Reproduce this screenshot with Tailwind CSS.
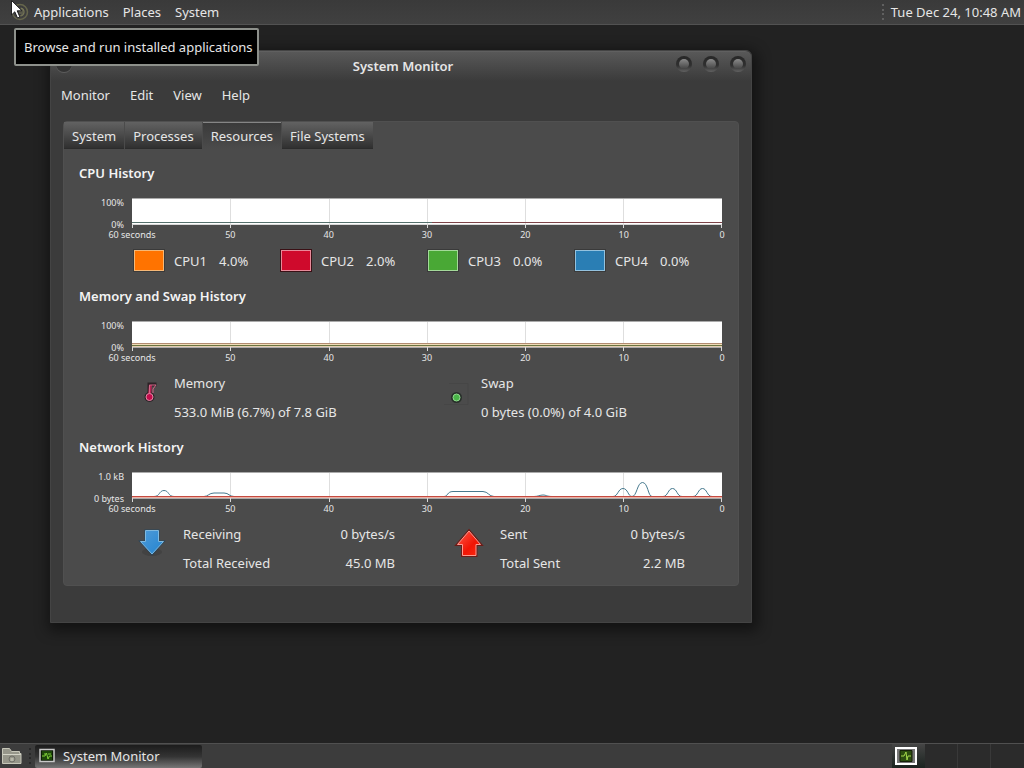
<!DOCTYPE html>
<html lang="en">
<head>
  <meta charset="UTF-8" />
  <meta name="viewport" content="width=device-width, initial-scale=1.0" />
  <title>System Monitor</title>
  <script src="https://cdn.jsdelivr.net/npm/@tailwindcss/browser@4"></script>
</head>
<body class="min-h-screen flex flex-col bg-[#222222] font-['Noto_Sans',sans-serif] text-[13px] leading-5 text-[#e6e6e6] cursor-default">

  <!-- Top panel -->
  <header class="h-[25px] flex items-center justify-between bg-linear-to-b from-[#3a3a3a] to-[#404040] border-b border-[#525252] pr-[3px]">
    <nav class="flex items-center gap-[14px]">
      <button class="flex items-center gap-1 pl-[10px]">
        <svg class="w-5 h-5" viewBox="0 0 20 20" fill="none" aria-hidden="true">
          <circle cx="10" cy="10" r="7.500" stroke="#66664c" stroke-width="1.500" />
          <circle cx="10" cy="10" r="4" stroke="#7b7b58" stroke-width="1.200" stroke-dasharray="14 5" />
          <path d="M10 8v4M12 7v6" stroke="#77775a" />
        </svg>
        Applications
      </button>
      <button>Places</button>
      <button>System</button>
    </nav>
    <div class="flex items-center gap-[6px]">
      <svg class="w-1 h-4" viewBox="0 0 4 16" fill="#606060" aria-hidden="true"><path d="M1 0h2v2H1zM1 5h2v2H1zM1 9h2v2H1zM1 14h2v2H1z" /></svg>
      <button>Tue Dec 24, 10:48 AM</button>
    </div>
  </header>

  <!-- Desktop -->
  <div class="flex-1"></div>

  <!-- System Monitor window -->
  <main class="absolute left-[50px] top-[50px] w-[702px] bg-[#3b3b3b] rounded-t-md border border-[#444444] shadow-[2px_4px_14px_4px_rgba(0,0,0,0.45)]">
    <div class="h-[30px] flex items-center bg-linear-to-b from-[#585858] to-[#3b3b3b] rounded-t-md border-t border-[#606060] px-1 pb-[2px]">
      <button class="w-[18px] h-[18px]" aria-label="Window menu">
        <svg viewBox="0 0 18 18" aria-hidden="true"><circle cx="9" cy="8" r="8" fill="#5c5c5c" /><circle cx="9" cy="7" r="8" fill="#333333" /></svg>
      </button>
      <h1 class="flex-1 pl-[58px] text-center font-semibold">System Monitor</h1>
      <div class="flex gap-[9px] pb-1">
        <button class="w-[18px] h-[18px]" aria-label="Minimize">
          <svg viewBox="0 0 18 18" aria-hidden="true"><use href="#knob" /></svg>
        </button>
        <button class="w-[18px] h-[18px]" aria-label="Maximize">
          <svg viewBox="0 0 18 18" aria-hidden="true"><use href="#knob" /></svg>
        </button>
        <button class="w-[18px] h-[18px]" aria-label="Close">
          <svg viewBox="0 0 18 18" aria-hidden="true"><use href="#knob" /></svg>
        </button>
      </div>
    </div>

    <div class="flex gap-5 px-[10px] pt-1">
      <button>Monitor</button>
      <button>Edit</button>
      <button>View</button>
      <button>Help</button>
    </div>

    <div class="mx-3 mt-4 mb-9 bg-[#4b4b4b] border border-[#505050] rounded-sm">
      <div class="flex items-start gap-px h-[27px]" role="tablist">
        <button role="tab" aria-selected="false" class="h-[27px] px-2 pt-px bg-linear-to-b from-[#626262] via-[#4a4a4a] to-[#303030] border-b border-[#2c2c2c]">System</button>
        <button role="tab" aria-selected="false" class="h-[27px] px-2 pt-px bg-linear-to-b from-[#626262] via-[#4a4a4a] to-[#303030] border-b border-[#2c2c2c]">Processes</button>
        <button role="tab" aria-selected="true" class="h-[27px] px-2 bg-linear-to-b from-[#3a3a3a] to-[#4b4b4b] border-t border-[#858585]">Resources</button>
        <button role="tab" aria-selected="false" class="h-[27px] px-2 pt-px bg-linear-to-b from-[#626262] via-[#4a4a4a] to-[#303030] border-b border-[#2c2c2c]">File Systems</button>
      </div>

      <div class="flex flex-col gap-[15px] pl-[15px] pr-4 pt-[14px] pb-3">
        <!-- CPU -->
        <section>
          <h2 class="font-semibold text-[#f4f4f4]">CPU History</h2>
          <div class="mt-[15px] flex gap-2 text-[9px] leading-[10px]">
            <div class="w-[45px] h-8 flex flex-col justify-between text-right whitespace-nowrap"><span>100%</span><span>0%</span></div>
            <div class="flex-1">
              <svg class="block w-full h-[30px]" viewBox="0 0 590 30" preserveAspectRatio="none" shape-rendering="crispEdges" aria-hidden="true">
                <use href="#plot" />
                <path d="M0 24.500H300" stroke="#55706c" />
                <path d="M300 24.500H590" stroke="#7c4448" />
                <path d="M0 26.500H590" stroke="#d8d8d8" />
              </svg>
              <div class="flex justify-between pt-[2px] whitespace-nowrap">
                <span class="w-0 flex justify-center">60 seconds</span>
                <span class="w-0 flex justify-center">50</span>
                <span class="w-0 flex justify-center">40</span>
                <span class="w-0 flex justify-center">30</span>
                <span class="w-0 flex justify-center">20</span>
                <span class="w-0 flex justify-center">10</span>
                <span class="w-0 flex justify-center">0</span>
              </div>
            </div>
          </div>
          <div class="mt-[10px] ml-[55px] grid grid-cols-4 h-[21px]">
            <div class="flex items-center"><button class="w-[30px] h-[21px] mr-[10px] bg-[#ff7300] border border-[#f5b877] outline outline-[#3a3a3a]" aria-label="CPU1 color"></button>CPU1<span class="ml-3">4.0%</span></div>
            <div class="flex items-center"><button class="w-[30px] h-[21px] mr-[10px] bg-[#cf0a2c] border border-[#e88a9a] outline outline-[#3a1015]" aria-label="CPU2 color"></button>CPU2<span class="ml-3">2.0%</span></div>
            <div class="flex items-center"><button class="w-[30px] h-[21px] mr-[10px] bg-[#49a835] border border-[#a4d99a] outline outline-[#3a3a3a]" aria-label="CPU3 color"></button>CPU3<span class="ml-3">0.0%</span></div>
            <div class="flex items-center"><button class="w-[30px] h-[21px] mr-[10px] bg-[#2a7eb4] border border-[#94c2de] outline outline-[#3a3a3a]" aria-label="CPU4 color"></button>CPU4<span class="ml-3">0.0%</span></div>
          </div>
        </section>

        <!-- Memory and swap -->
        <section>
          <h2 class="font-semibold text-[#f4f4f4]">Memory and Swap History</h2>
          <div class="mt-[15px] flex gap-2 text-[9px] leading-[10px]">
            <div class="w-[45px] h-8 flex flex-col justify-between text-right whitespace-nowrap"><span>100%</span><span>0%</span></div>
            <div class="flex-1">
              <svg class="block w-full h-[30px]" viewBox="0 0 590 30" preserveAspectRatio="none" shape-rendering="crispEdges" aria-hidden="true">
                <use href="#plot" />
                <path d="M0 22.500H590" stroke="#b08a70" />
                <path d="M0 23.500H590" stroke="#f0dcb8" />
                <path d="M0 24.500H590" stroke="#6a7440" />
                <path d="M0 25.500H590" stroke="#e3cdb0" />
              </svg>
              <div class="flex justify-between pt-[2px] whitespace-nowrap">
                <span class="w-0 flex justify-center">60 seconds</span>
                <span class="w-0 flex justify-center">50</span>
                <span class="w-0 flex justify-center">40</span>
                <span class="w-0 flex justify-center">30</span>
                <span class="w-0 flex justify-center">20</span>
                <span class="w-0 flex justify-center">10</span>
                <span class="w-0 flex justify-center">0</span>
              </div>
            </div>
          </div>
          <div class="mt-[10px] ml-[53px] grid grid-cols-[42fr_265fr_42fr_241fr] items-start">
            <button class="w-9 h-9" aria-label="Memory color">
              <svg viewBox="0 0 36 36" aria-hidden="true">
                <path d="M17.500 22V11.500h7" stroke="#2c2226" stroke-width="4" fill="none" />
                <circle cx="17.500" cy="24" r="5" fill="#2c2226" />
                <path d="M17.500 22L18.500 12" stroke="#b32553" stroke-width="3" />
                <path d="M17.500 20V12h6.500l-3 4v4" stroke="#cf6586" fill="none" />
                <circle cx="17.500" cy="24" r="3.500" fill="#c40c4c" stroke="#e38ba7" />
              </svg>
            </button>
            <div class="flex flex-col gap-[9px]"><span>Memory</span><span>533.0 MiB (6.7%) of 7.8 GiB</span></div>
            <button class="w-9 h-9" aria-label="Swap color">
              <svg viewBox="0 0 36 36" aria-hidden="true">
                <path d="M5 31.500h24V10.500H10" stroke="#464646" fill="none" />
                <circle cx="17.500" cy="24.500" r="5.500" fill="#28302a" />
                <circle cx="17.500" cy="24.500" r="3.500" fill="#49b548" stroke="#92dc8f" />
              </svg>
            </button>
            <div class="flex flex-col gap-[9px]"><span>Swap</span><span>0 bytes (0.0%) of 4.0 GiB</span></div>
          </div>
        </section>

        <!-- Network -->
        <section>
          <h2 class="font-semibold text-[#f4f4f4]">Network History</h2>
          <div class="mt-[15px] flex gap-2 text-[9px] leading-[10px]">
            <div class="w-[45px] h-8 flex flex-col justify-between text-right whitespace-nowrap"><span>1.0 kB</span><span>0 bytes</span></div>
            <div class="flex-1">
              <svg class="block w-full h-[30px]" viewBox="0 0 590 30" preserveAspectRatio="none" aria-hidden="true">
                <use href="#plot" shape-rendering="crispEdges" />
                <path d="M0 24.500H22C28 24.500 27 18.500 32 18.500S36 24.500 42 24.500H72C76 24.500 77 21 82 21H92C97 21 97 24.500 102 24.500H312C316 24.500 315 19.500 321 19.500H351C356 19.500 357 24.500 362 24.500H402C406 24.500 408 23 411 23S415 24.500 420 24.500H481C486 24.500 486 16.500 491 16.500S496 24.500 500 24.500C505 24.500 505 10.500 510.500 10.500S516 24.500 520 24.500H531C536 24.500 536 16.500 540.500 16.500S545 24.500 550 24.500H561C566 24.500 566 16.500 570.500 16.500S575 24.500 580 24.500H590" stroke="#46798e" fill="none" />
                <path d="M0 24.500H590" stroke="#c44a40" />
                <path d="M0 25.500H590" stroke="#eeb0a4" />
              </svg>
              <div class="flex justify-between pt-[2px] whitespace-nowrap">
                <span class="w-0 flex justify-center">60 seconds</span>
                <span class="w-0 flex justify-center">50</span>
                <span class="w-0 flex justify-center">40</span>
                <span class="w-0 flex justify-center">30</span>
                <span class="w-0 flex justify-center">20</span>
                <span class="w-0 flex justify-center">10</span>
                <span class="w-0 flex justify-center">0</span>
              </div>
            </div>
          </div>
          <div class="mt-[10px] ml-[53px] mr-[37px] grid grid-cols-[51fr_212fr_54fr_51fr_185fr] items-start">
            <button class="w-10 h-10" aria-label="Receiving color">
              <svg viewBox="0 0 40 40" aria-hidden="true">
                <defs><linearGradient id="blue" x2="1" y2="1"><stop stop-color="#4f9bd8" /><stop offset="1" stop-color="#2384d0" /></linearGradient></defs>
                <ellipse cx="20" cy="28" rx="10" ry="4" fill="#424242" />
                <path d="M13.500 6.500h13v11h5L20 30 8.500 17.500h5z" fill="url(#blue)" stroke="#28465c" stroke-width="2" />
                <path d="M13.500 6.500h13v11h5L20 30 8.500 17.500h5z" fill="url(#blue)" stroke="#7fb9df" />
              </svg>
            </button>
            <div class="flex flex-col gap-[9px]">
              <div class="flex justify-between"><span>Receiving</span><span>0 bytes/s</span></div>
              <div class="flex justify-between"><span>Total Received</span><span>45.0 MB</span></div>
            </div>
            <span></span>
            <button class="w-10 h-10" aria-label="Sent color">
              <svg viewBox="0 0 40 40" aria-hidden="true">
                <defs><linearGradient id="red" x2="1" y2="1"><stop stop-color="#ff5a4a" /><stop offset="0.600" stop-color="#f01505" /><stop offset="1" stop-color="#ff2a10" /></linearGradient></defs>
                <path d="M20 7L31.500 20.500H27v11H13.500v-11H8.500z" fill="url(#red)" stroke="#6b1c18" stroke-width="3" />
                <path d="M20 7L31.500 20.500H27v11H13.500v-11H8.500z" fill="url(#red)" stroke="#ff9a90" />
              </svg>
            </button>
            <div class="flex flex-col gap-[9px]">
              <div class="flex justify-between"><span>Sent</span><span>0 bytes/s</span></div>
              <div class="flex justify-between"><span>Total Sent</span><span>2.2 MB</span></div>
            </div>
          </div>
        </section>
      </div>
    </div>
  </main>

  <!-- Tooltip of the Applications menu -->
  <div role="tooltip" class="absolute left-[14px] top-[28px] pl-2 pr-1 py-[7px] bg-black border-2 border-[#8d908b] rounded-xs whitespace-nowrap">Browse and run installed applications</div>

  <!-- Mouse pointer -->
  <svg class="absolute left-[11px] top-0 w-3 h-5" viewBox="0 0 12 20" aria-hidden="true">
    <path d="M.5.500v14.500l3.300-3.200 2.700 6.200 2.400-1-2.700-6.200H11z" fill="#ffffff" stroke="#222222" />
  </svg>

  <!-- Bottom panel -->
  <footer class="h-[25px] flex items-center bg-[#3c3c3c] border-t border-[#505050]">
    <button class="w-6 h-5" aria-label="Show files">
      <svg viewBox="0 0 24 20" aria-hidden="true">
        <path d="M2.500 17.500V2.500h7l2 3h8v2h1.500v10z" fill="#96968a" stroke="#c6c6b8" />
        <path d="M3 8.500h18" stroke="#d3d3c6" />
        <circle cx="12" cy="13" r="3" fill="none" stroke="#707068" />
        <path d="M10.500 12h3v3h-3z" fill="#b8b8aa" />
      </svg>
    </button>
    <svg class="w-1 h-4 ml-1 mr-[3px]" viewBox="0 0 4 16" fill="#292929" aria-hidden="true"><path d="M1 0h2v2H1zM1 5h2v2H1zM1 9h2v2H1zM1 14h2v2H1z" /></svg>
    <button class="w-[167px] h-[23px] flex items-center gap-2 px-1 bg-linear-to-b from-[#1c1c1c] via-[#343434] to-[#777777] rounded-xs">
      <svg class="w-4 h-4" viewBox="0 0 16 16" aria-hidden="true"><use href="#monitor" /></svg>
      System Monitor
    </button>
    <span class="flex-1"></span>
    <div class="h-full w-[132px] grid grid-cols-4 bg-[#2b2b2b]">
      <button class="flex items-center pl-[3px] bg-linear-to-b from-[#454545] to-[#1c2420]" aria-label="Workspace 1">
        <svg class="w-[22px] h-[18px]" viewBox="0 0 22 18" aria-hidden="true">
          <path d="M1 1h20v16H1z" fill="#777777" stroke="#ffffff" stroke-width="2" />
          <path d="M5 3.500h12v11H5z" fill="#2c4d10" stroke="#162009" />
          <path d="M6 9h3l2-4 1 8 1-4h3" stroke="#a4d94a" fill="none" />
        </svg>
      </button>
      <button class="border-r border-[#393939]" aria-label="Workspace 2"></button>
      <button class="border-r border-[#393939]" aria-label="Workspace 3"></button>
      <button aria-label="Workspace 4"></button>
    </div>
  </footer>

  <!-- Shared shapes -->
  <svg class="absolute w-0 h-0" aria-hidden="true">
    <defs>
      <linearGradient id="rim" x2="0" y2="1"><stop stop-color="#272727" /><stop offset="0.600" stop-color="#303030" /><stop offset="1" stop-color="#626262" /></linearGradient>
      <linearGradient id="ball" x2="0" y2="1"><stop stop-color="#8a8a8a" /><stop offset="0.450" stop-color="#6a6a6a" /><stop offset="1" stop-color="#434343" /></linearGradient>
      <g id="knob">
        <circle cx="9" cy="9" r="8" fill="url(#rim)" />
        <circle cx="9" cy="9" r="5" fill="url(#ball)" />
      </g>
      <g id="plot">
        <path d="M0 0H590V26H0z" fill="#ffffff" />
        <path d="M98.500 0V26M197.500 0V26M295.500 0V26M393.500 0V26M491.500 0V26" stroke="#dedede" />
        <path d="M0 .5H590M0 26.500H590" stroke="#aaaaaa" />
        <path d="M.5 26V30M98.500 26V30M197.500 26V30M295.500 26V30M393.500 26V30M491.500 26V30M589.500 26V30" stroke="#d8d8d8" />
      </g>
      <g id="monitor">
        <path d="M1 1.500h14v12H1z" fill="#0d1a06" stroke="#c8c8c8" stroke-width="1.500" />
        <path d="M3 3h10v9H3z" fill="#1c4509" />
        <path d="M3 8h3l1.500-3L9 11l1.500-3H13M5 6h2M9 6h3" stroke="#7fd038" fill="none" />
      </g>
    </defs>
  </svg>
</body>
</html>
